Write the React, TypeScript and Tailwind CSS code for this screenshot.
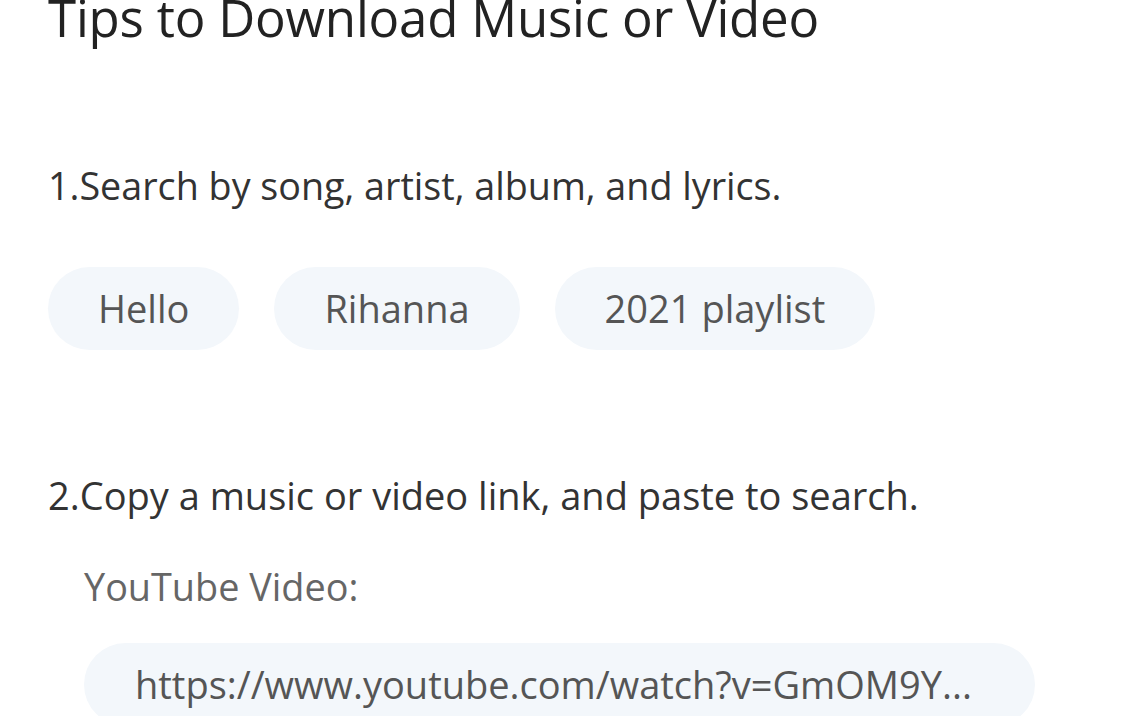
import React from "react";

export default function App() {
  const pills = ["Hello", "Rihanna", "2021 playlist"];
  return (
    <div className="w-[1146px] h-[716px] overflow-hidden bg-white" style={{ fontFamily: '"Open Sans", "Noto Sans", sans-serif' }}>
      <div className="pl-[48px]">
        <h1 className="text-[51px] leading-[60px] -mt-[13px] text-[#222] font-normal tracking-[-0.2px] whitespace-nowrap">Tips to Download Music or Video</h1>
        <p className="mt-[114px] text-[37.7px] leading-[50px] text-[#333]">1.Search by song, artist, album, and lyrics.</p>
        <div className="mt-[56px] flex gap-[35px]">
          {pills.map((p) => (
            <div key={p} className="h-[83px] px-[50px] rounded-full bg-[#f3f7fb] flex items-center text-[38px] text-[#555]">
              {p}
            </div>
          ))}
        </div>
        <p className="mt-[120px] text-[38px] leading-[50px] text-[#333]">2.Copy a music or video link, and paste to search.</p>
        <div className="pl-[36px]">
          <p className="mt-[42px] text-[37.8px] leading-[50px] text-[#666]">YouTube Video:</p>
          <div className="mt-[31px] w-[951px] h-[83px] px-[51px] rounded-full bg-[#f3f7fb] flex items-center text-[38px] text-[#555]">
            https://www.youtube.com/watch?v=GmOM9Y...
          </div>
        </div>
      </div>
    </div>
  );
}
